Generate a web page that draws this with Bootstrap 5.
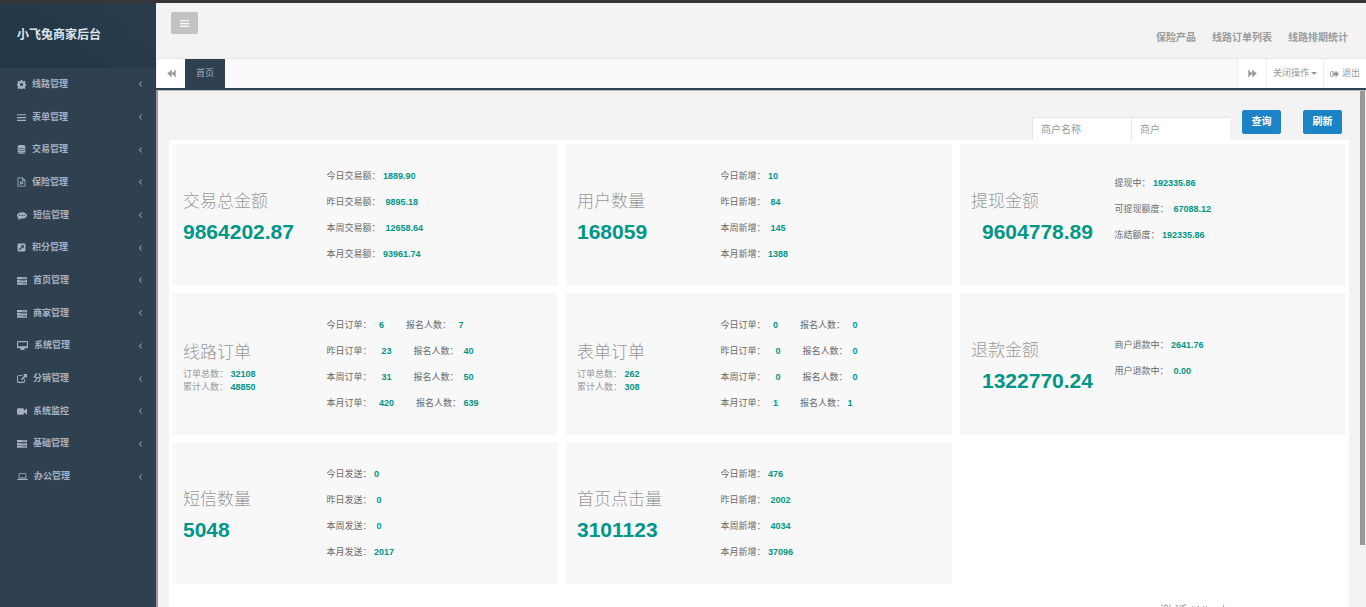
<!DOCTYPE html>
<html lang="zh-CN">
<head>
<meta charset="utf-8">
<meta name="viewport" content="width=device-width, initial-scale=1">
<title>小飞兔商家后台</title>
<link href="https://cdn.jsdelivr.net/npm/bootstrap@5.3.0/dist/css/bootstrap.min.css" rel="stylesheet">
<style>
  body { font-family: "Liberation Sans", "Noto Sans CJK SC", sans-serif; font-size: 9px; line-height: 13px; color: #676a6c; background: #f3f3f3; border-top: 3px solid #35353b; }
  a { color: inherit; text-decoration: none; }
  svg { fill: currentColor; flex: none; }
  .side { width: 156px; background: #2f4050; color: #a7b1c2; font-weight: 700; }
  .brand { height: 65px; padding: 0 17px; font-size: 12px; color: #dfe4ed; }
  .brand-bg { background: linear-gradient(40deg, #243847 0 48%, #263a49 48% 75%, #283c4b 75%); }
  .menu { min-height: 70vh; }
  .menu a { padding: 0 13px 0 17px; gap: 6px; }
  .topbar { height: 55px; padding: 0 18px 0 15px; font-size: 10px; font-weight: 700; color: #999c9e; }
  .topbar nav { gap: 16px; padding-top: 13px; }
  .fold { width: 27px; height: 22px; margin-top: 9px; background: #c2c2c2; color: #fff; border: 0; border-radius: 2px; }
  .tabs { border-top: 1px solid #e7e7e7; border-bottom: 2px solid #2f4050; height: 32px; background: #fafafa; color: #999; }
  .tabs > * { background: #fff; border: 0; border-left: 1px solid #eee; padding: 0; color: #999; }
  .tabs .arrow { width: 29px; }
  .tabs .current { width: 40px; background: #2f4050; color: #a7b1c2; border: 0; }
  .tabs .closer { width: 57px; gap: 2px; }
  .tabs .leave { width: 43px; gap: 3px; }
  .view { border-left: 2px solid #999; border-top: 1px solid #bbb; background: #f3f3f3; }
  .view main { padding-left: 11px; }
  .search { height: 49px; padding-right: 7px; }
  .search input { width: 99px; height: 23px; border: 1px solid #e5e6e7; border-bottom: 0; border-right: 0; padding: 0 8px; font-size: 10px; background: #fff; border-radius: 0; outline: 0; }
  .search input::placeholder { color: #999; }
  .search .btn { width: 39px; height: 24px; padding: 0; margin-bottom: 6px; background: #1c84c6; border-color: #1c84c6; color: #fff; font-size: 10px; font-weight: 700; border-radius: 2px; line-height: 22px; }
  .search .query { margin-left: 12px; margin-right: 22px; }
  .panel { padding: 4px 3px; background: #fff; }
  .tiles { display: grid; grid-template-columns: repeat(3, 1fr); gap: 7px 8px; }
  .tile { min-height: 142px; background: #f8f8f8; }
  .tile-main { width: 40%; padding: 3px 0 0 11px; color: #999; white-space: nowrap; }
  .tile h2 { font-size: 17px; line-height: 30px; font-weight: 300; margin: 0; }
  .total { font-size: 21px; line-height: 30px; font-weight: 700; color: #009688; }
  .inset-total { padding-left: 11px; }
  .tile b { color: #009688; }
  .tile ul { line-height: 26px; margin: 0; white-space: nowrap; }
  .tile .short-list { padding-bottom: 13px; }
  .people { margin-left: 22px; }
  .thumb { width: 5px; height: 88%; background: #999; margin: 0 1px 0 11px; }
  .notice { position: fixed; right: 110px; bottom: -14px; width: 96px; font: 14px/20px "Open Sans", "Noto Sans CJK SC", sans-serif; color: #aaa; white-space: nowrap; }
</style>
</head>
<body class="d-flex vh-100 overflow-hidden">
<svg class="d-none">
  <symbol id="i-cog" viewBox="0 0 16 16"><path fill-rule="evenodd" d="M6.500 0h3l.5 2.300 1.200.5 2-1.300 2.100 2.100-1.300 2 .5 1.200 2.300.5v3l-2.300.5-.5 1.200 1.300 2-2.100 2.100-2-1.300-1.200.5-.5 2.300h-3l-.5-2.300-1.200-.5-2 1.300L.7 14l1.300-2-.5-1.200L0 10.300v-3l1.500-.5.5-1.200-1.300-2 2.100-2.100 2 1.300 1.200-.5zM8 5.300a2.700 2.700 0 1 0 0 5.400 2.700 2.700 0 0 0 0-5.400z"/></symbol>
  <symbol id="i-bars" viewBox="0 0 16 16"><path d="M0 2h16v2.200H0zM0 7h16v2.200H0zM0 12h16v2.200H0z"/></symbol>
  <symbol id="i-db" viewBox="0 0 16 16"><path d="M1 2.500C1-.6 15-.6 15 2.500v1c0 3-14 3-14 0zM1 5.500c3 2 11 2 14 0v2c0 3-14 3-14 0zM1 9.500c3 2 11 2 14 0v2c0 3-14 3-14 0zM1 13.300c3 2 11 2 14 0v.5c0 3-14 3-14 0z"/></symbol>
  <symbol id="i-file" viewBox="0 0 16 16"><path fill-rule="evenodd" d="M1 0h9l5 5v11H1zM2.500 1.500v13h11V6H9V1.500zM10.300 2v2.700H13zM5.500 7H9a2.300 2.300 0 0 1 0 4.600H7.500V13h-2zM7.500 8.500v1.700h1.200a.8.8 0 0 0 0-1.700z"/></symbol>
  <symbol id="i-chat" viewBox="0 0 18 16"><path fill-rule="evenodd" d="M9 2c5 0 9 2.500 9 5.800s-4 5.800-9 5.800l-1.800-.1C5.500 15 3.500 15.700 1.500 15.700c1-.8 1.600-1.800 1.700-3.100C1.200 11.500 0 9.800 0 7.800 0 4.500 4 2 9 2zM4 6.800v2h2v-2zm4 0v2h2v-2zm4 0v2h2v-2z"/></symbol>
  <symbol id="i-square" viewBox="0 0 16 16"><path fill-rule="evenodd" d="M3 1h10a2 2 0 0 1 2 2v10a2 2 0 0 1-2 2H3a2 2 0 0 1-2-2V3a2 2 0 0 1 2-2zM6.500 4l2 2-5 5L5.300 12.700l5-5 2 2V4z"/></symbol>
  <symbol id="i-server" viewBox="0 0 18 16"><path fill-rule="evenodd" d="M0 1.500h18v4H0zM0 6.500h18v4H0zM0 11.500h18v4H0zM9 3v1h7V3zM5 8v1h11V8zM11 13v1h5v-1z"/></symbol>
  <symbol id="i-desktop" viewBox="0 0 20 16"><path fill-rule="evenodd" d="M1.500 0h17A1.500 1.500 0 0 1 20 1.500v10a1.500 1.500 0 0 1-1.500 1.500H13v1.500h1V16H6v-1.500h1V13H1.500A1.500 1.500 0 0 1 0 11.500v-10A1.500 1.500 0 0 1 1.500 0zM2 2v7.500h16V2z"/></symbol>
  <symbol id="i-share" viewBox="0 0 18 16"><path d="M2.500 2H10v1.700H3.200c-1 0-1.500.5-1.500 1.300v7.500c0 1 .5 1.500 1.500 1.500h8c1 0 1.500-.5 1.500-1.500V9.500h1.600V13a3 3 0 0 1-3 3H3a3 3 0 0 1-3-3V5a3 3 0 0 1 2.500-3zM11 0h7v7l-2.300-2.300L9 11.200 7 9.200l6.500-6.800z"/></symbol>
  <symbol id="i-video" viewBox="0 0 18 16"><path d="M2.500 2H10a2.500 2.500 0 0 1 2.500 2.500v2L18 2v12l-5.500-4.500v2A2.500 2.500 0 0 1 10 14H2.500A2.500 2.500 0 0 1 0 11.500v-7A2.500 2.500 0 0 1 2.500 2z"/></symbol>
  <symbol id="i-laptop" viewBox="0 0 20 16"><path fill-rule="evenodd" d="M4.500 2h11A1.500 1.500 0 0 1 17 3.500v8H3v-8A1.500 1.500 0 0 1 4.500 2zM4.500 3.500v6.500h11V3.500zM0 12.500h20c0 1-1 2-2.500 2h-15C1 14.500 0 13.500 0 12.500z"/></symbol>
  <symbol id="i-left" viewBox="0 0 8 16"><path d="M6 3L2 8l4 5" fill="none" stroke="currentColor" stroke-width="2"/></symbol>
  <symbol id="i-next" viewBox="0 0 16 16"><path d="M.5 1v14L7.500 8.500V15l8-7-8-7v6.500z"/></symbol>
  <symbol id="i-prev" viewBox="0 0 16 16"><path d="M15.500 1v14L8.500 8.500V15L.5 8l8-7v6.500z"/></symbol>
  <symbol id="i-out" viewBox="0 0 18 16"><path d="M7 2v1.500H3.500C2.500 3.500 2 4 2 5v6c0 1 .5 1.500 1.500 1.500H7V14H3.500A3 3 0 0 1 .5 11V5a3 3 0 0 1 3-3zM11 1l7 7-7 7v-4H5V5h6z"/></symbol>
</svg>

<aside class="side flex-shrink-0">
  <div class="brand brand-bg d-flex align-items-center">小飞兔商家后台</div>
  <nav class="menu d-flex flex-column">
    <a href="#" class="flex-fill d-flex align-items-center"><svg width="9" height="9"><use href="#i-cog"/></svg><span>线路管理</span><svg class="ms-auto" width="5" height="8"><use href="#i-left"/></svg></a>
    <a href="#" class="flex-fill d-flex align-items-center"><svg width="9" height="9"><use href="#i-bars"/></svg><span>表单管理</span><svg class="ms-auto" width="5" height="8"><use href="#i-left"/></svg></a>
    <a href="#" class="flex-fill d-flex align-items-center"><svg width="9" height="9"><use href="#i-db"/></svg><span>交易管理</span><svg class="ms-auto" width="5" height="8"><use href="#i-left"/></svg></a>
    <a href="#" class="flex-fill d-flex align-items-center"><svg width="9" height="10"><use href="#i-file"/></svg><span>保险管理</span><svg class="ms-auto" width="5" height="8"><use href="#i-left"/></svg></a>
    <a href="#" class="flex-fill d-flex align-items-center"><svg width="10" height="9"><use href="#i-chat"/></svg><span>短信管理</span><svg class="ms-auto" width="5" height="8"><use href="#i-left"/></svg></a>
    <a href="#" class="flex-fill d-flex align-items-center"><svg width="9" height="9"><use href="#i-square"/></svg><span>积分管理</span><svg class="ms-auto" width="5" height="8"><use href="#i-left"/></svg></a>
    <a href="#" class="flex-fill d-flex align-items-center"><svg width="10" height="9"><use href="#i-server"/></svg><span>首页管理</span><svg class="ms-auto" width="5" height="8"><use href="#i-left"/></svg></a>
    <a href="#" class="flex-fill d-flex align-items-center"><svg width="10" height="9"><use href="#i-server"/></svg><span>商家管理</span><svg class="ms-auto" width="5" height="8"><use href="#i-left"/></svg></a>
    <a href="#" class="flex-fill d-flex align-items-center"><svg width="11" height="9"><use href="#i-desktop"/></svg><span>系统管理</span><svg class="ms-auto" width="5" height="8"><use href="#i-left"/></svg></a>
    <a href="#" class="flex-fill d-flex align-items-center"><svg width="10" height="9"><use href="#i-share"/></svg><span>分销管理</span><svg class="ms-auto" width="5" height="8"><use href="#i-left"/></svg></a>
    <a href="#" class="flex-fill d-flex align-items-center"><svg width="10" height="9"><use href="#i-video"/></svg><span>系统监控</span><svg class="ms-auto" width="5" height="8"><use href="#i-left"/></svg></a>
    <a href="#" class="flex-fill d-flex align-items-center"><svg width="10" height="9"><use href="#i-server"/></svg><span>基础管理</span><svg class="ms-auto" width="5" height="8"><use href="#i-left"/></svg></a>
    <a href="#" class="flex-fill d-flex align-items-center"><svg width="11" height="9"><use href="#i-laptop"/></svg><span>办公管理</span><svg class="ms-auto" width="5" height="8"><use href="#i-left"/></svg></a>
  </nav>
</aside>

<div class="flex-fill d-flex flex-column overflow-hidden">
  <header class="topbar d-flex justify-content-between align-items-start flex-shrink-0">
    <button type="button" class="fold d-flex align-items-center justify-content-center" aria-label="收起菜单"><svg width="9" height="9"><use href="#i-bars"/></svg></button>
    <nav class="d-flex align-self-center"><a href="#">保险产品</a><a href="#">线路订单列表</a><a href="#">线路排期统计</a></nav>
  </header>
  <div class="tabs d-flex flex-shrink-0">
    <button type="button" class="arrow d-flex align-items-center justify-content-center" aria-label="向左"><svg width="9" height="9"><use href="#i-prev"/></svg></button>
    <a href="#" class="current d-flex align-items-center justify-content-center">首页</a>
    <button type="button" class="arrow ms-auto d-flex align-items-center justify-content-center" aria-label="向右"><svg width="9" height="9"><use href="#i-next"/></svg></button>
    <button type="button" class="closer d-flex align-items-center justify-content-center">关闭操作<svg width="6" height="3" viewBox="0 0 6 3"><path d="M0 0h6L3 3z"/></svg></button>
    <a href="#" class="leave d-flex align-items-center justify-content-center"><svg width="9" height="8"><use href="#i-out"/></svg>退出</a>
  </div>
  <div class="view flex-fill d-flex overflow-hidden">
    <main class="flex-fill d-flex flex-column">
      <form class="search d-flex justify-content-end align-items-end flex-shrink-0">
        <input type="text" placeholder="商户名称" aria-label="商户名称"><input type="text" placeholder="商户" aria-label="商户">
        <button type="button" class="btn query">查询</button>
        <button type="button" class="btn">刷新</button>
      </form>
      <div class="panel flex-fill">
        <div class="tiles">
          <section class="tile d-flex align-items-center">
            <div class="tile-main"><h2>交易总金额</h2><div class="total">9864202.87</div></div>
            <ul class="list-unstyled"><li>今日交易额： <b>1889.90</b></li><li>昨日交易额：&nbsp; <b>9895.18</b></li><li>本周交易额：&nbsp; <b>12658.64</b></li><li>本月交易额： <b>93961.74</b></li></ul>
          </section>
          <section class="tile d-flex align-items-center">
            <div class="tile-main"><h2>用户数量</h2><div class="total">168059</div></div>
            <ul class="list-unstyled"><li>今日新增： <b>10</b></li><li>昨日新增：&nbsp; <b>84</b></li><li>本周新增：&nbsp; <b>145</b></li><li>本月新增： <b>1388</b></li></ul>
          </section>
          <section class="tile d-flex align-items-center">
            <div class="tile-main"><h2>提现金额</h2><div class="total inset-total">9604778.89</div></div>
            <ul class="list-unstyled short-list"><li>提现中： <b>192335.86</b></li><li>可提现额度：&nbsp; <b>67088.12</b></li><li>冻结额度： <b>192335.86</b></li></ul>
          </section>
          <section class="tile d-flex align-items-center">
            <div class="tile-main"><h2>线路订单</h2><div>订单总数： <b>32108</b></div><div>累计人数： <b>48850</b></div></div>
            <ul class="list-unstyled"><li>今日订单：&nbsp;&nbsp; <b>6</b><span class="people">报名人数：&nbsp;&nbsp; <b>7</b></span></li><li>昨日订单：&nbsp;&nbsp;&nbsp; <b>23</b><span class="people">报名人数：&nbsp; <b>40</b></span></li><li>本周订单：&nbsp;&nbsp;&nbsp; <b>31</b><span class="people">报名人数：&nbsp; <b>50</b></span></li><li>本月订单：&nbsp;&nbsp; <b>420</b><span class="people">报名人数： <b>639</b></span></li></ul>
          </section>
          <section class="tile d-flex align-items-center">
            <div class="tile-main"><h2>表单订单</h2><div>订单总数： <b>262</b></div><div>累计人数： <b>308</b></div></div>
            <ul class="list-unstyled"><li>今日订单：&nbsp;&nbsp; <b>0</b><span class="people">报名人数：&nbsp;&nbsp; <b>0</b></span></li><li>昨日订单：&nbsp;&nbsp;&nbsp; <b>0</b><span class="people">报名人数：&nbsp; <b>0</b></span></li><li>本周订单：&nbsp;&nbsp;&nbsp; <b>0</b><span class="people">报名人数：&nbsp; <b>0</b></span></li><li>本月订单：&nbsp;&nbsp; <b>1</b><span class="people">报名人数： <b>1</b></span></li></ul>
          </section>
          <section class="tile d-flex align-items-center">
            <div class="tile-main"><h2>退款金额</h2><div class="total inset-total">1322770.24</div></div>
            <ul class="list-unstyled short-list"><li>商户退款中： <b>2641.76</b></li><li>用户退款中：&nbsp; <b>0.00</b></li></ul>
          </section>
          <section class="tile d-flex align-items-center">
            <div class="tile-main"><h2>短信数量</h2><div class="total">5048</div></div>
            <ul class="list-unstyled"><li>今日发送： <b>0</b></li><li>昨日发送：&nbsp; <b>0</b></li><li>本周发送：&nbsp; <b>0</b></li><li>本月发送： <b>2017</b></li></ul>
          </section>
          <section class="tile d-flex align-items-center">
            <div class="tile-main"><h2>首页点击量</h2><div class="total">3101123</div></div>
            <ul class="list-unstyled"><li>今日新增： <b>476</b></li><li>昨日新增：&nbsp; <b>2002</b></li><li>本周新增：&nbsp; <b>4034</b></li><li>本月新增： <b>37096</b></li></ul>
          </section>
        </div>
      </div>
    </main>
    <div class="thumb flex-shrink-0"></div>
  </div>
</div>
<div class="notice">激活 Windows</div>
<script src="https://cdn.jsdelivr.net/npm/bootstrap@5.3.0/dist/js/bootstrap.bundle.min.js"></script>
</body>
</html>
